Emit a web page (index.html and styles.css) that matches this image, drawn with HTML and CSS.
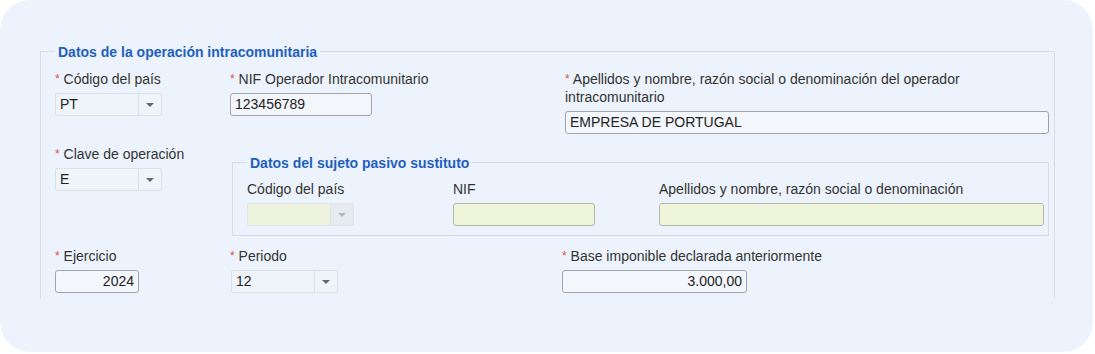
FILE: index.html
```html
<!DOCTYPE html>
<html lang="es">
<head>
    <meta charset="UTF-8">
    <title>Datos de la operación intracomunitaria</title>
    <link rel="stylesheet" href="styles.css">
</head>
<body>
    <div class="card">
        <fieldset class="group">
            <legend>Datos de la operación intracomunitaria</legend>
            <div class="grid">
                <div class="field">
                    <label><span class="req">*</span> Código del país</label>
                    <div class="select w-md"><span class="value">PT</span><span class="arrow"></span></div>
                </div>
                <div class="field">
                    <label><span class="req">*</span> NIF Operador Intracomunitario</label>
                    <div class="input w-nif">123456789</div>
                </div>
                <div class="field shift">
                    <label><span class="req">*</span> Apellidos y nombre, razón social o denominación del operador intracomunitario</label>
                    <div class="input">EMPRESA DE PORTUGAL</div>
                </div>

                <div class="field">
                    <label><span class="req">*</span> Clave de operación</label>
                    <div class="select w-md"><span class="value">E</span><span class="arrow"></span></div>
                </div>
                <fieldset class="sub">
                    <legend>Datos del sujeto pasivo sustituto</legend>
                    <div class="sub-grid">
                        <div class="field">
                            <label>Código del país</label>
                            <div class="select disabled w-md"><span class="value"></span><span class="arrow"></span></div>
                        </div>
                        <div class="field">
                            <label>NIF</label>
                            <div class="input green w-nif"></div>
                        </div>
                        <div class="field">
                            <label>Apellidos y nombre, razón social o denominación</label>
                            <div class="input green"></div>
                        </div>
                    </div>
                </fieldset>

                <div class="field">
                    <label><span class="req">*</span> Ejercicio</label>
                    <div class="input num w-sm">2024</div>
                </div>
                <div class="field">
                    <label><span class="req">*</span> Periodo</label>
                    <div class="select w-md nudge"><span class="value">12</span><span class="arrow"></span></div>
                </div>
                <div class="field">
                    <label><span class="req">*</span> Base imponible declarada anteriormente</label>
                    <div class="input num w-base">3.000,00</div>
                </div>
            </div>
        </fieldset>
    </div>
</body>
</html>
```

FILE: styles.css
```css
body {
    margin: 0;
    background: #fff;
    font-family: "Liberation Sans", Arial, sans-serif;
    font-size: 14px;
    color: #333;
}

.card {
    width: 1093px;
    height: 352px;
    box-sizing: border-box;
    background: #edf3fc;
    border-radius: 30px;
    padding: 41px 38px 0 40px;
}

fieldset {
    margin: 0;
    min-width: 0;
    border: 1px solid #d6dde7;
}

legend {
    padding: 2px 3px 0;
    line-height: 18px;
    font-weight: bold;
    color: #1f5fbf;
}

.group {
    border-bottom: none;
    padding: 9px 5px 5px 14px;
}

.grid {
    display: grid;
    grid-template-columns: 175px 332px 1fr;
    row-gap: 11px;
    align-items: start;
}

.sub {
    grid-column: 2 / 4;
    margin: 7px 0 0 2px;
    padding: 8px 4px 9px 14px;
}

.sub-grid {
    display: grid;
    grid-template-columns: 206px 206px 1fr;
    align-items: start;
}

.field label {
    display: block;
    line-height: 18px;
    margin-bottom: 5px;
}

.shift {
    margin-left: 3px;
}

.nudge {
    margin-left: 1px;
}

.req {
    color: #d9534f;
    font-size: 12px;
    vertical-align: 1px;
}

.input {
    box-sizing: border-box;
    height: 23px;
    line-height: 21px;
    padding: 0 4px;
    border: 1px solid #9ea4ac;
    border-radius: 3px;
    background: #f3f6fb;
    color: #222;
}

.input.num {
    text-align: right;
}

.input.green {
    background: #eef5d8;
    border-color: #b4b9ae;
}

.select {
    box-sizing: border-box;
    display: flex;
    height: 23px;
    border: 1px solid #d9e0ea;
    border-radius: 2px;
    background: #eff4fb;
    color: #222;
}

.select .value {
    flex: 1;
    padding-left: 4px;
    line-height: 21px;
}

.select .arrow {
    width: 22px;
    border-left: 1px solid #dce3ec;
    display: flex;
    align-items: center;
    justify-content: center;
}

.select .arrow::after {
    content: "";
    border-left: 4px solid transparent;
    border-right: 4px solid transparent;
    border-top: 4px solid #666;
}

.select.disabled {
    background: #e6ebf2;
    border-color: #e0e5ec;
}

.select.disabled .value {
    background: #eef3de;
}

.select.disabled .arrow::after {
    border-top-color: #b3b8c0;
}

.w-sm { width: 84px; }
.w-md { width: 107px; }
.w-nif { width: 142px; }
.w-base { width: 185px; }
```
